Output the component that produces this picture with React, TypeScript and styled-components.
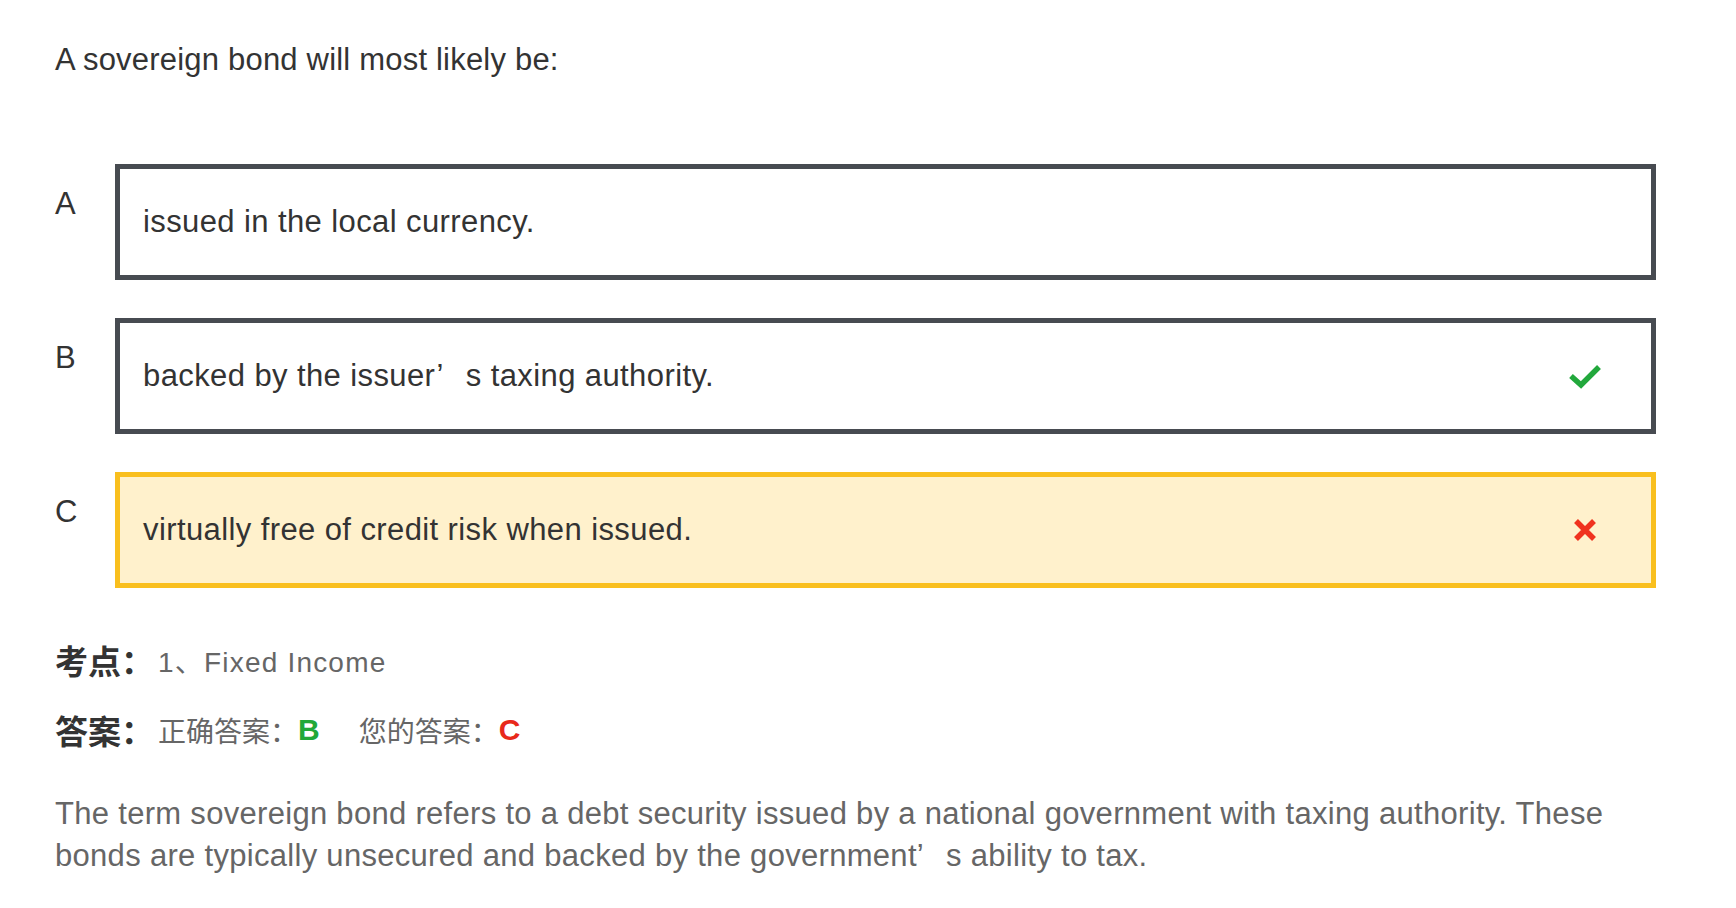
import styled, { createGlobalStyle } from 'styled-components'

/** 全局样式 */
const GlobalStyle = createGlobalStyle`
  html, body {
    margin: 0;
    padding: 0;
    background: #fff;
  }
  body {
    font-family: 'Liberation Sans', 'Noto Sans CJK SC', sans-serif;
    color: #333;
  }
`

/** 页面容器 */
const Page = styled.div`
  width: 1736px;
  box-sizing: border-box;
  padding: 42px 80px 40px 55px;
`

/** 题干 */
const Question = styled.div`
  font-size: 31px;
  line-height: 36px;
  letter-spacing: 0.2px;
  color: #333;
  margin-bottom: 86px;
`

/** 选项列表 */
const OptionList = styled.div`
  display: flex;
  flex-direction: column;
  gap: 38px;
`

/** 选项行 */
const OptionRow = styled.div`
  display: grid;
  grid-template-columns: 60px 1fr;
`

/** 选项字母 */
const OptionLetter = styled.div`
  font-size: 31px;
  line-height: 36px;
  padding-top: 22px;
  color: #333;
`

/** 选项框 */
const OptionBox = styled.div<{ $picked?: boolean }>`
  height: 116px;
  box-sizing: border-box;
  border: 5px solid ${(p) => (p.$picked ? '#f9bf1e' : '#474b51')};
  background: ${(p) => (p.$picked ? '#fff1cc' : '#fff')};
  display: flex;
  align-items: center;
  justify-content: space-between;
  padding: 0 50px 0 23px;
`

/** 选项文本 */
const OptionText = styled.span`
  font-size: 31px;
  line-height: 36px;
  letter-spacing: 0.4px;
  color: #333;
`

/** 全角样式的撇号 */
const Quote = styled.span`
  margin-right: 22px;
`

/** 信息区 */
const MetaBlock = styled.div`
  display: flex;
  flex-direction: column;
  gap: 26px;
  margin-top: 50px;
`

/** 信息行 */
const MetaRow = styled.div`
  display: flex;
  align-items: center;
  height: 44px;
`

/** 信息标签 */
const MetaLabel = styled.span`
  font-family: 'Noto Sans CJK SC', sans-serif;
  font-weight: 700;
  font-size: 33px;
  color: #333;
  margin-right: 4px;
`

/** 信息值 */
const MetaValue = styled.span<{ $latin?: boolean }>`
  font-size: 28px;
  letter-spacing: ${(p) => (p.$latin ? '1.2px' : '0')};
  color: #666;
`

/** 答案字母 */
const AnswerLetter = styled.span<{ $ok?: boolean }>`
  font-family: 'Liberation Sans', sans-serif;
  font-weight: 700;
  font-size: 30px;
  color: ${(p) => (p.$ok ? '#21a839' : '#e8291b')};
  margin-right: ${(p) => (p.$ok ? '39px' : '0')};
`

/** 解析 */
const Explanation = styled.p`
  margin: 41px 0 0;
  font-size: 31px;
  line-height: 42px;
  letter-spacing: 0.3px;
  color: #666;
`

function CheckIcon() {
  return (
    <svg width="32" height="25" viewBox="0 0 32 25">
      <path d="M2 12 L12 21 L30 3" fill="none" stroke="#22a83c" strokeWidth="5.5" />
    </svg>
  )
}

function CrossIcon() {
  return (
    <svg width="24" height="24" viewBox="0 0 24 24" style={{ marginRight: 4 }}>
      <path d="M3 3 L21 21 M21 3 L3 21" fill="none" stroke="#f0321e" strokeWidth="5.5" />
    </svg>
  )
}

const options = [
  { key: 'A', text: <>issued in the local currency.</> },
  {
    key: 'B',
    text: (
      <>
        backed by the issuer<Quote>’</Quote>s taxing authority.
      </>
    ),
    mark: 'ok',
  },
  { key: 'C', text: <>virtually free of credit risk when issued.</>, mark: 'bad', picked: true },
]

export default function App() {
  return (
    <>
      <GlobalStyle />
      <Page>
        <Question>A sovereign bond will most likely be:</Question>

        <OptionList>
          {options.map((o) => (
            <OptionRow key={o.key}>
              <OptionLetter>{o.key}</OptionLetter>
              <OptionBox $picked={o.picked}>
                <OptionText>{o.text}</OptionText>
                {o.mark === 'ok' && <CheckIcon />}
                {o.mark === 'bad' && <CrossIcon />}
              </OptionBox>
            </OptionRow>
          ))}
        </OptionList>

        <MetaBlock>
          <MetaRow>
            <MetaLabel>考点：</MetaLabel>
            <MetaValue $latin>1、Fixed Income</MetaValue>
          </MetaRow>
          <MetaRow>
            <MetaLabel>答案：</MetaLabel>
            <MetaValue>正确答案：</MetaValue>
            <AnswerLetter $ok>B</AnswerLetter>
            <MetaValue>您的答案：</MetaValue>
            <AnswerLetter>C</AnswerLetter>
          </MetaRow>
        </MetaBlock>

        <Explanation>
          The term sovereign bond refers to a debt security issued by a national government with taxing
          authority. These bonds are typically unsecured and backed by the government<Quote>’</Quote>s
          ability to tax.
        </Explanation>
      </Page>
    </>
  )
}
